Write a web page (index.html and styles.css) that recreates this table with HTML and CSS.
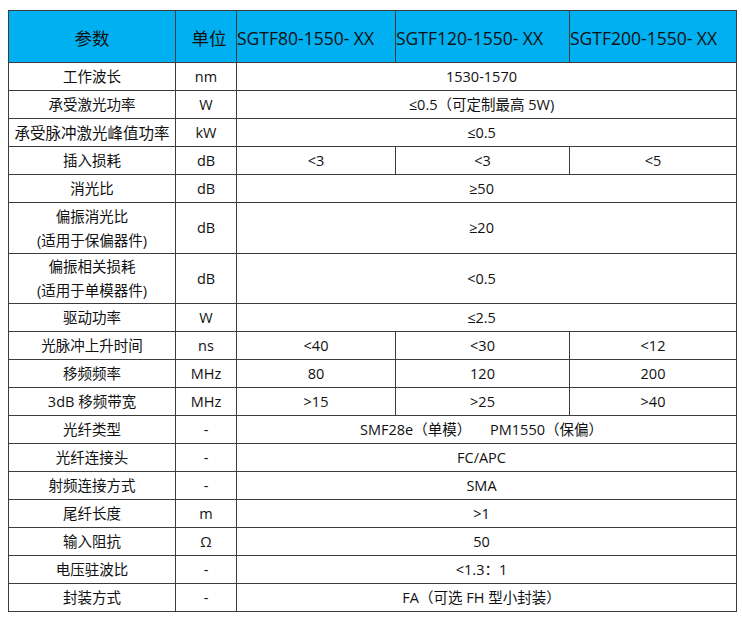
FILE: index.html
```html
<!DOCTYPE html>
<html lang="zh">
<head>
<meta charset="utf-8">
<title>SGTF 参数</title>
<link rel="stylesheet" href="styles.css">
</head>
<body>
<table class="spec">
  <colgroup>
    <col class="c1"><col class="c2"><col class="c3"><col class="c4"><col class="c5">
  </colgroup>
  <thead>
    <tr class="head">
      <th class="hc">参数</th>
      <th class="hc unit">单位</th>
      <th class="hl">SGTF80-1550- XX</th>
      <th class="hl">SGTF120-1550- XX</th>
      <th class="hl">SGTF200-1550- XX</th>
    </tr>
  </thead>
  <tbody>
    <tr><td>工作波长</td><td>nm</td><td colspan="3" class="span">1530-1570</td></tr>
    <tr><td>承受激光功率</td><td>W</td><td colspan="3" class="span">≤0.5（可定制最高 5W)</td></tr>
    <tr><td class="wide">承受脉冲激光峰值功率</td><td>kW</td><td colspan="3" class="span">≤0.5</td></tr>
    <tr><td>插入损耗</td><td>dB</td><td>&lt;3</td><td>&lt;3</td><td>&lt;5</td></tr>
    <tr><td>消光比</td><td>dB</td><td colspan="3" class="span">≥50</td></tr>
    <tr class="tall"><td class="two">偏振消光比<br>(适用于保偏器件)</td><td>dB</td><td colspan="3" class="span">≥20</td></tr>
    <tr class="tall2"><td class="two2">偏振相关损耗<br>(适用于单模器件)</td><td>dB</td><td colspan="3" class="span">&lt;0.5</td></tr>
    <tr><td>驱动功率</td><td>W</td><td colspan="3" class="span">≤2.5</td></tr>
    <tr><td>光脉冲上升时间</td><td>ns</td><td>&lt;40</td><td>&lt;30</td><td>&lt;12</td></tr>
    <tr><td>移频频率</td><td>MHz</td><td>80</td><td>120</td><td>200</td></tr>
    <tr><td>3dB 移频带宽</td><td>MHz</td><td>&gt;15</td><td>&gt;25</td><td>&gt;40</td></tr>
    <tr><td>光纤类型</td><td>-</td><td colspan="3" class="span">SMF28e（单模）&nbsp;&nbsp;&nbsp;&nbsp; PM1550（保偏）</td></tr>
    <tr><td>光纤连接头</td><td>-</td><td colspan="3" class="span">FC/APC</td></tr>
    <tr><td>射频连接方式</td><td>-</td><td colspan="3" class="span">SMA</td></tr>
    <tr><td>尾纤长度</td><td>m</td><td colspan="3" class="span">&gt;1</td></tr>
    <tr><td>输入阻抗</td><td>Ω</td><td colspan="3" class="span">50</td></tr>
    <tr><td>电压驻波比</td><td>-</td><td colspan="3" class="span">&lt;1.3：1</td></tr>
    <tr><td>封装方式</td><td>-</td><td colspan="3" class="span">FA（可选 FH 型小封装）</td></tr>
  </tbody>
</table>
</body>
</html>
```

FILE: styles.css
```css
html, body {
  margin: 0;
  padding: 0;
  background: #ffffff;
}
body {
  padding: 10px 0 0 8px;
  font-family: "Open Sans", "Noto Sans CJK SC", sans-serif;
  color: #111111;
}
.spec {
  border-collapse: collapse;
  table-layout: fixed;
  width: 729px;
  font-size: 14.5px;
}
.c1 { width: 167px; }
.c2 { width: 61px; }
.c3 { width: 159px; }
.c4 { width: 174px; }
.c5 { width: 167px; }

.spec th, .spec td {
  border: 1px solid #3c3c3c;
  padding: 0;
  text-align: center;
  vertical-align: middle;
  white-space: nowrap;
  line-height: 20px;
}
.spec tbody tr { height: 28px; }
.spec .head { height: 52px; }
.spec .head th {
  background: #00b0f0;
  font-weight: normal;
  font-size: 17.5px;
  color: #111111;
  padding-top: 3px;
}
.spec th.hl {
  text-align: left;
  overflow: visible;
}
.spec th.unit { padding-left: 6px; }
.spec .tall { height: 51px; }
.spec .tall2 { height: 50px; }
.spec td.two { line-height: 24px; padding-top: 2px; }
.spec td.two2 { line-height: 24px; padding-top: 1px; }
.spec td.span { padding-right: 10px; }
.spec td.wide { font-size: 15.5px; overflow: visible; }
```
